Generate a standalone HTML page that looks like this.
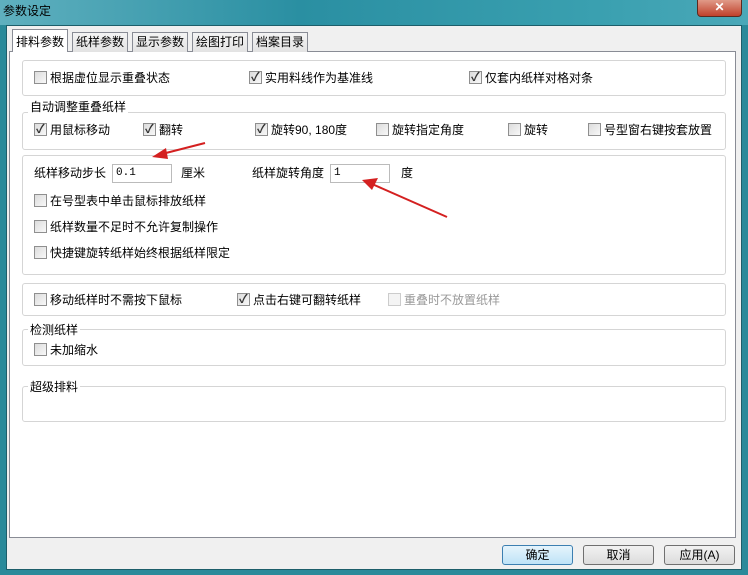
<!DOCTYPE html>
<html><head><meta charset="utf-8"><style>
*{box-sizing:border-box;margin:0;padding:0}
body{width:748px;height:575px;overflow:hidden;background:#2a8a9a;font-family:"Liberation Sans","Noto Sans CJK SC",sans-serif;font-size:12px;color:#000;position:relative}
.ab{position:absolute}
.title{left:0;top:0;width:748px;height:25px;background:linear-gradient(90deg,#5fb0bf 0%,#2a8fa2 40%,#3aa0b0 80%,#4aa8b8 100%)}
.client{left:6px;top:25px;width:736px;height:545px;background:#f0f0f0;border:1px solid #1d5e6a}
.panel{left:9px;top:51px;width:727px;height:487px;background:#fff;border:1px solid #898c95}
.tab{top:32px;height:20px;border:1px solid #898c95;border-bottom:none;background:linear-gradient(#f4f4f4,#e3e3e3);font-size:12px;line-height:18px;padding:0 3px}
.tab.sel{top:29px;height:23px;background:#fff;line-height:24px;z-index:2}
.grp{border:1px solid #d5d5d5;border-radius:3px}
.lbl{background:#fff;padding:0 2px;line-height:14px}
.cb{width:13px;height:13px;border:1px solid #8f8f8f;background:linear-gradient(135deg,#dcdcdc,#f8f8f8);display:inline-block;vertical-align:-2px;margin-right:3px;position:relative}
.cb.c::after{content:"✓";position:absolute;left:1px;top:-3px;font-size:12px;color:#333;font-weight:bold}
.t{position:absolute;white-space:nowrap;line-height:16px}
.inp{border:1px solid #bbb;background:#fff;height:19px;font-size:11px;line-height:17px;padding-left:3px;font-family:"Liberation Mono",monospace}
.btn{top:545px;height:20px;border:1px solid #707070;border-radius:3px;background:linear-gradient(#f2f2f2,#dcdcdc);text-align:center;line-height:18px}
</style></head><body>
<div class="ab title"></div>
<div class="t" style="left:3px;top:3px;color:#000">参数设定</div>
<div class="ab" style="left:697px;top:0;width:45px;height:17px;background:linear-gradient(#e09a88,#c0412b);border:1px solid #5a2a20;border-top:none;border-radius:0 0 4px 4px;color:#fff;text-align:center;font-weight:bold;line-height:15px">✕</div>
<div class="ab client"></div>
<div class="ab panel"></div>
<div class="ab tab sel" style="left:12px">排料参数</div>
<div class="ab tab" style="left:72px">纸样参数</div>
<div class="ab tab" style="left:132px">显示参数</div>
<div class="ab tab" style="left:192px">绘图打印</div>
<div class="ab tab" style="left:252px">档案目录</div>

<div class="ab grp" style="left:22px;top:60px;width:704px;height:36px"></div>
<div class="t" style="left:34px;top:70px"><span class="cb"></span>根据虚位显示重叠状态</div>
<div class="t" style="left:249px;top:70px"><span class="cb c"></span>实用料线作为基准线</div>
<div class="t" style="left:469px;top:70px"><span class="cb c"></span>仅套内纸样对格对条</div>

<div class="ab grp" style="left:22px;top:112px;width:704px;height:38px"></div>
<div class="t lbl" style="left:28px;top:99px">自动调整重叠纸样</div>
<div class="t" style="left:34px;top:122px"><span class="cb c"></span>用鼠标移动</div>
<div class="t" style="left:143px;top:122px"><span class="cb c"></span>翻转</div>
<div class="t" style="left:255px;top:122px"><span class="cb c"></span>旋转90, 180度</div>
<div class="t" style="left:376px;top:122px"><span class="cb"></span>旋转指定角度</div>
<div class="t" style="left:508px;top:122px"><span class="cb"></span>旋转</div>
<div class="t" style="left:588px;top:122px"><span class="cb"></span>号型窗右键按套放置</div>

<div class="ab grp" style="left:22px;top:155px;width:704px;height:120px"></div>
<div class="t" style="left:34px;top:165px">纸样移动步长</div>
<div class="ab inp" style="left:112px;top:164px;width:60px">0.1</div>
<div class="t" style="left:181px;top:165px">厘米</div>
<div class="t" style="left:252px;top:165px">纸样旋转角度</div>
<div class="ab inp" style="left:330px;top:164px;width:60px">1</div>
<div class="t" style="left:401px;top:165px">度</div>
<div class="t" style="left:34px;top:193px"><span class="cb"></span>在号型表中单击鼠标排放纸样</div>
<div class="t" style="left:34px;top:219px"><span class="cb"></span>纸样数量不足时不允许复制操作</div>
<div class="t" style="left:34px;top:245px"><span class="cb"></span>快捷键旋转纸样始终根据纸样限定</div>

<div class="ab grp" style="left:22px;top:283px;width:704px;height:33px"></div>
<div class="t" style="left:34px;top:292px"><span class="cb"></span>移动纸样时不需按下鼠标</div>
<div class="t" style="left:237px;top:292px"><span class="cb c"></span>点击右键可翻转纸样</div>
<div class="t" style="left:388px;top:292px;color:#999"><span class="cb" style="background:#f4f4f4;border-color:#ccc"></span>重叠时不放置纸样</div>

<div class="ab grp" style="left:22px;top:329px;width:704px;height:37px"></div>
<div class="t lbl" style="left:28px;top:322px">检测纸样</div>
<div class="t" style="left:34px;top:342px"><span class="cb"></span>未加缩水</div>

<div class="ab grp" style="left:22px;top:386px;width:704px;height:36px"></div>
<div class="t lbl" style="left:28px;top:379px">超级排料</div>

<svg class="ab" style="left:0;top:0" width="748" height="575">
<g stroke="#d42020" stroke-width="2" fill="#d42020">
<line x1="205" y1="143" x2="162" y2="154"/>
<polygon points="152,157 166,148 168,159" stroke="none"/>
<line x1="447" y1="217" x2="372" y2="184"/>
<polygon points="362,180 378,178 372,190" stroke="none"/>
</g></svg>

<div class="ab btn" style="left:502px;width:71px;border-color:#3c7fb1;background:linear-gradient(#e5f4fc,#bfe3f7)">确定</div>
<div class="ab btn" style="left:583px;width:71px">取消</div>
<div class="ab btn" style="left:664px;width:71px">应用(A)</div>
</body></html>
